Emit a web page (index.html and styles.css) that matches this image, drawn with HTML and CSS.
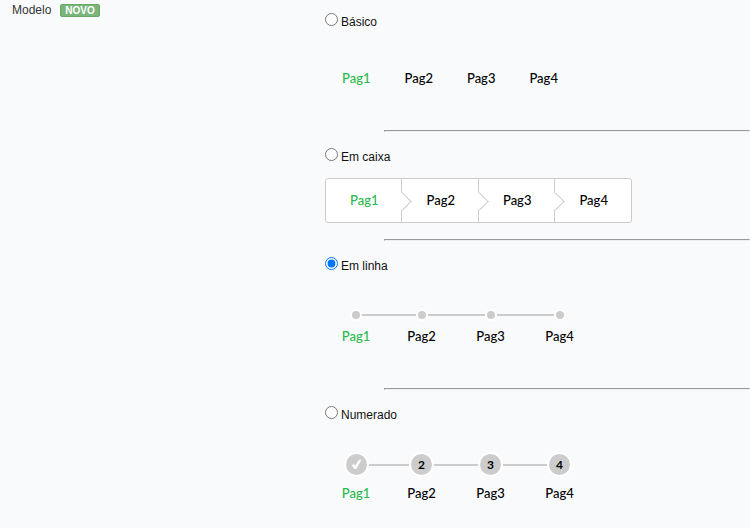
FILE: index.html
```html
<!DOCTYPE html>
<html lang="pt">
<head>
<meta charset="utf-8">
<title>Modelo</title>
<link rel="stylesheet" href="styles.css">
</head>
<body>
<form class="field" role="group" aria-labelledby="field-name">
  <div class="field-label"><span id="field-name">Modelo</span><span class="badge">NOVO</span></div>
  <div class="options">
    <section class="option">
      <label class="choice"><input type="radio" name="model"><span>Básico</span></label>
      <ol class="steps basic">
        <li class="active">Pag1</li><li>Pag2</li><li>Pag3</li><li>Pag4</li>
      </ol>
    </section>
    <hr>
    <section class="option">
      <label class="choice"><input type="radio" name="model"><span>Em caixa</span></label>
      <ol class="steps boxed">
        <li class="active">Pag1</li><li>Pag2</li><li>Pag3</li><li>Pag4</li>
      </ol>
    </section>
    <hr>
    <section class="option">
      <label class="choice"><input type="radio" name="model" checked><span>Em linha</span></label>
      <ol class="steps track dotted">
        <li class="active"><span class="dot"></span>Pag1</li>
        <li><span class="dot"></span>Pag2</li>
        <li><span class="dot"></span>Pag3</li>
        <li><span class="dot"></span>Pag4</li>
      </ol>
    </section>
    <hr>
    <section class="option">
      <label class="choice"><input type="radio" name="model"><span>Numerado</span></label>
      <ol class="steps track numbered">
        <li class="active"><span class="dot"><svg width="11" height="11" viewBox="0 0 11 11" aria-hidden="true"><path d="M.8 6.4 2.8 4.8 4.3 6.7 8 .8H10.4L5.2 10H3.4Z" fill="#fff"/></svg></span>Pag1</li>
        <li><span class="dot">2</span>Pag2</li>
        <li><span class="dot">3</span>Pag3</li>
        <li><span class="dot">4</span>Pag4</li>
      </ol>
    </section>
  </div>
</form>
</body>
</html>
```
FILE: styles.css
```css
* { box-sizing: border-box; }

body {
  margin: 0;
  background: #f9fafc;
  color: #111;
  font: 12px/20px "Liberation Sans", Arial, sans-serif;
}

.field {
  display: grid;
  grid-template-columns: 313px 1fr;
  padding-left: 12px;
}

.field-label {
  display: flex;
  align-items: center;
  align-self: start;
  gap: 9px;
  color: #333;
}

.badge {
  padding: 0 4px;
  border: 1px solid #69a869;
  border-radius: 2px;
  background: #7ab67a;
  color: #fff;
  font-size: 10px;
  font-weight: bold;
  line-height: 11px;
}

.options { padding-top: 10px; }

.choice {
  display: flex;
  width: max-content;
  gap: 3px;
  line-height: 24px;
}

.choice input {
  width: 13px;
  height: 13px;
  margin: 3px 0 0;
}

hr {
  margin: 0 0 13px 59px;
  border: 1px solid;
  border-color: #999 #eee #eee #999;
}

.steps {
  display: flex;
  width: max-content;
  margin: 0;
  padding: 0;
  list-style: none;
  font: 13px/20px Lato, sans-serif;
  font-weight: 500;
  color: #000;
}

.active { color: #28b94b; }

.basic { padding: 34px 0 42px; }
.basic li { padding: 0 17px; }

.boxed {
  margin: 9px 0 16px;
  border: 1px solid #ccc;
  border-radius: 3px;
  background: #fff;
}

.boxed li {
  position: relative;
  padding: 11px 23px 12px 24px;
}

.boxed li + li { border-left: 1px solid #ccc; }

.boxed li + li::before {
  content: "";
  position: absolute;
  left: -6px;
  top: 16px;
  width: 11px;
  height: 11px;
  border: 1px solid;
  border-color: #ccc #ccc transparent transparent;
  background: #fff;
  transform: rotate(45deg);
}

.track li {
  position: relative;
  display: flex;
  flex-direction: column;
  align-items: center;
  width: 69px;
}

.track li:first-child { width: 62px; }

.track li + li::before {
  content: "";
  position: absolute;
  right: 50%;
  width: 100%;
  height: 2px;
  background: #ccc;
}

.dot {
  position: relative;
  z-index: 1;
  display: flex;
  align-items: center;
  justify-content: center;
  border: 2px solid #fff;
  border-radius: 50%;
  background: #ccc;
  color: #000;
  font-weight: bold;
  font-size: 12px;
}

.dotted { padding: 31px 0 42px; }
.dotted .dot { width: 12px; height: 12px; margin-bottom: 5px; }
.dotted li::before { top: 5px; }

.numbered { padding: 25px 0 24px; }
.numbered .dot { width: 25px; height: 25px; margin-bottom: 6px; }
.numbered li::before { top: 12px; }
```
